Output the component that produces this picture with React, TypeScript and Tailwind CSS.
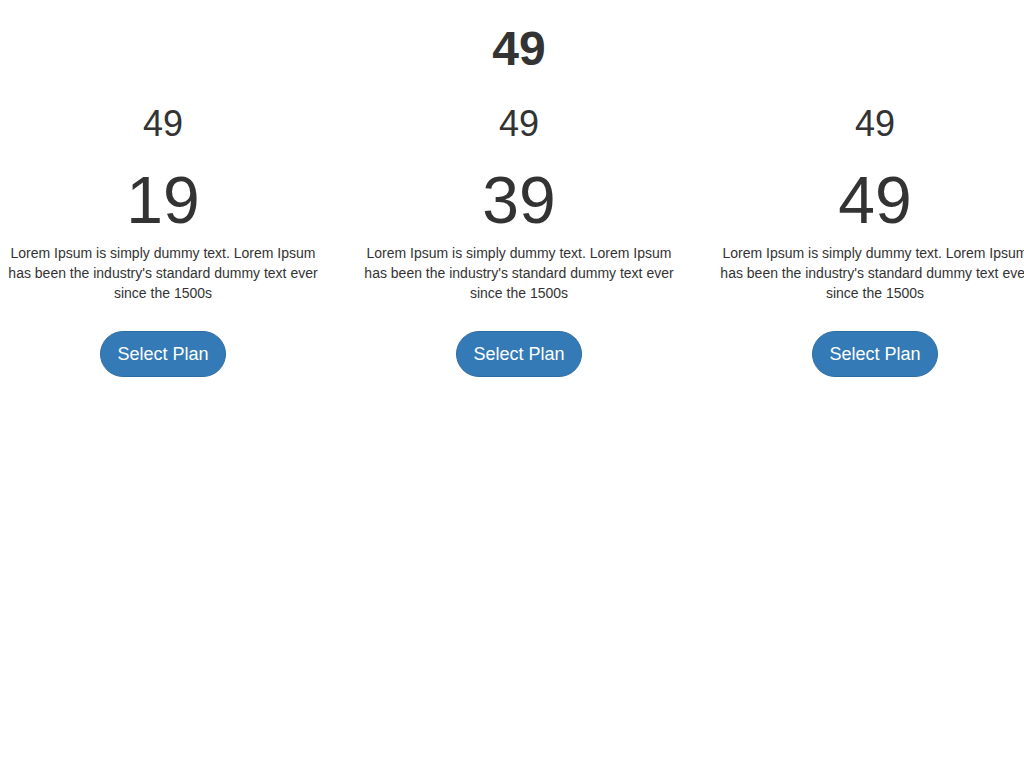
import React from "react";

const plans = [{ price: "19" }, { price: "39" }, { price: "49" }];

const PlanColumn = ({ price }: { price: string }) => {
  return (
    <div className="w-[356px] shrink-0 px-[15px] text-center">
      <h2 className="mt-[33px] text-[36px] leading-[36px] font-medium">49</h2>
      <h1 className="mt-[25px] text-[66px] leading-[66px]">{price}</h1>
      <p className="mt-[10px] text-[14px] leading-[20px]">
        Lorem Ipsum is simply dummy text. Lorem Ipsum has been the industry's
        standard dummy text ever since the 1500s
      </p>
      <button className="mt-[28px] rounded-full border border-[#2e6da4] bg-[#337ab7] px-[16px] py-[10px] text-[18px] leading-6 text-white">
        Select Plan
      </button>
    </div>
  );
};

const App = () => {
  return (
    <div
      className="h-[768px] w-full overflow-hidden bg-white text-[#333]"
      style={{ fontFamily: '"Liberation Sans", Arial, sans-serif' }}
    >
      <div className="-ml-[15px] w-[1068px]">
        <h1 className="pt-[25px] text-center text-[48px] leading-[48px] font-semibold">
          49
        </h1>
        <div className="flex">
          {plans.map((p, i) => (
            <PlanColumn key={i} price={p.price} />
          ))}
        </div>
      </div>
    </div>
  );
};

export default App;
